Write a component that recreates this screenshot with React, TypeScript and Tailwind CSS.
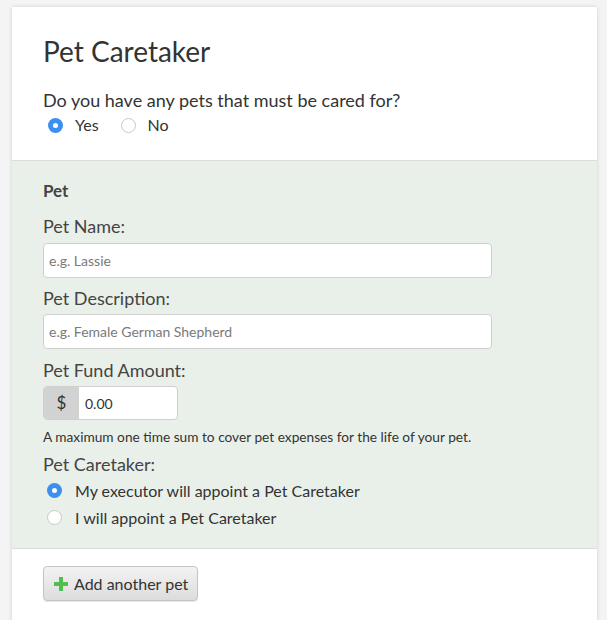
import React from "react";

function Radio({ checked }: { checked?: boolean }) {
  return checked ? (
    <span className="w-[15px] h-[15px] rounded-full bg-[#3b8ff0] flex items-center justify-center shrink-0">
      <span className="w-[5px] h-[5px] rounded-full bg-white" />
    </span>
  ) : (
    <span className="w-[15px] h-[15px] rounded-full bg-white border border-[#c8c8c8] shrink-0" />
  );
}

export default function App() {
  return (
    <div className="min-h-screen bg-[#f4f4f4] pt-[7px] pl-[12px] pr-[10px] font-['Lato',sans-serif] text-[#333]">
      <div className="bg-white shadow-[0_0_4px_rgba(0,0,0,0.15)] h-[640px]">
        {/* Header */}
        <div className="px-[31px] pt-[27px] pb-[24px]">
          <h1 className="text-[28px] leading-[34px] text-[#333]">Pet Caretaker</h1>
          <p className="text-[18px] leading-[24px] mt-[20px]">Do you have any pets that must be cared for?</p>
          <div className="flex items-center mt-[2px] ml-[5px] text-[16px] leading-[22px]">
            <Radio checked />
            <span className="ml-[12px]">Yes</span>
            <span className="ml-[22px] flex"><Radio /></span>
            <span className="ml-[12px]">No</span>
          </div>
        </div>

        {/* Pet section */}
        <div className="bg-[#e9f0ea] border-y border-[#dcdcdc] px-[31px] pt-[19px] pb-[19px]">
          <h2 className="text-[17px] leading-[22px] font-bold text-[#444]">Pet</h2>

          <label className="block text-[18px] leading-[24px] mt-[12px] text-[#444]">Pet Name:</label>
          <input
            placeholder="e.g. Lassie"
            className="mt-[5px] w-[449px] h-[35px] rounded-[4px] border border-[#cfcfcf] bg-white px-[5px] text-[14px] placeholder:text-[#7a7a7a] outline-none"
          />

          <label className="block text-[18px] leading-[24px] mt-[8px] text-[#444]">Pet Description:</label>
          <input
            placeholder="e.g. Female German Shepherd"
            className="mt-[4px] w-[449px] h-[35px] rounded-[4px] border border-[#cfcfcf] bg-white px-[5px] text-[14px] placeholder:text-[#7a7a7a] outline-none"
          />

          <label className="block text-[18px] leading-[24px] mt-[9px] text-[#444]">Pet Fund Amount:</label>
          <div className="mt-[4px] flex w-[135px] h-[34px] rounded-[4px] border border-[#cfcfcf] overflow-hidden bg-white">
            <span className="w-[35px] bg-[#d2d2d2] flex items-center justify-center text-[17px]">$</span>
            <input
              defaultValue="0.00"
              className="flex-1 min-w-0 px-[6px] text-[14px] text-[#333] outline-none"
            />
          </div>
          <p className="text-[13.7px] leading-[20px] mt-[7px]">
            A maximum one time sum to cover pet expenses for the life of your pet.
          </p>

          <label className="block text-[18px] leading-[24px] mt-[5px] text-[#444]">Pet Caretaker:</label>
          <div className="flex items-center mt-[3px] ml-[4px] text-[16px] leading-[23px]">
            <Radio checked />
            <span className="ml-[13px]">My executor will appoint a Pet Caretaker</span>
          </div>
          <div className="flex items-center mt-[4px] ml-[4px] text-[16px] leading-[23px]">
            <Radio />
            <span className="ml-[13px]">I will appoint a Pet Caretaker</span>
          </div>
        </div>

        {/* Footer */}
        <div className="px-[31px] pt-[17px]">
          <button className="flex items-center h-[35px] w-[155px] rounded-[4px] border border-[#c4c4c4] bg-gradient-to-b from-[#f3f3f3] to-[#dcdcdc] shadow-[0_1px_1px_rgba(0,0,0,0.1)] pl-[10px] text-[16px] text-[#333]">
            <svg width="14" height="14" viewBox="0 0 14 14" className="mr-[6px]">
              <path d="M5 0h4v5h5v4H9v5H5V9H0V5h5z" fill="#4fbf4f" />
            </svg>
            Add another pet
          </button>
        </div>
      </div>
    </div>
  );
}
